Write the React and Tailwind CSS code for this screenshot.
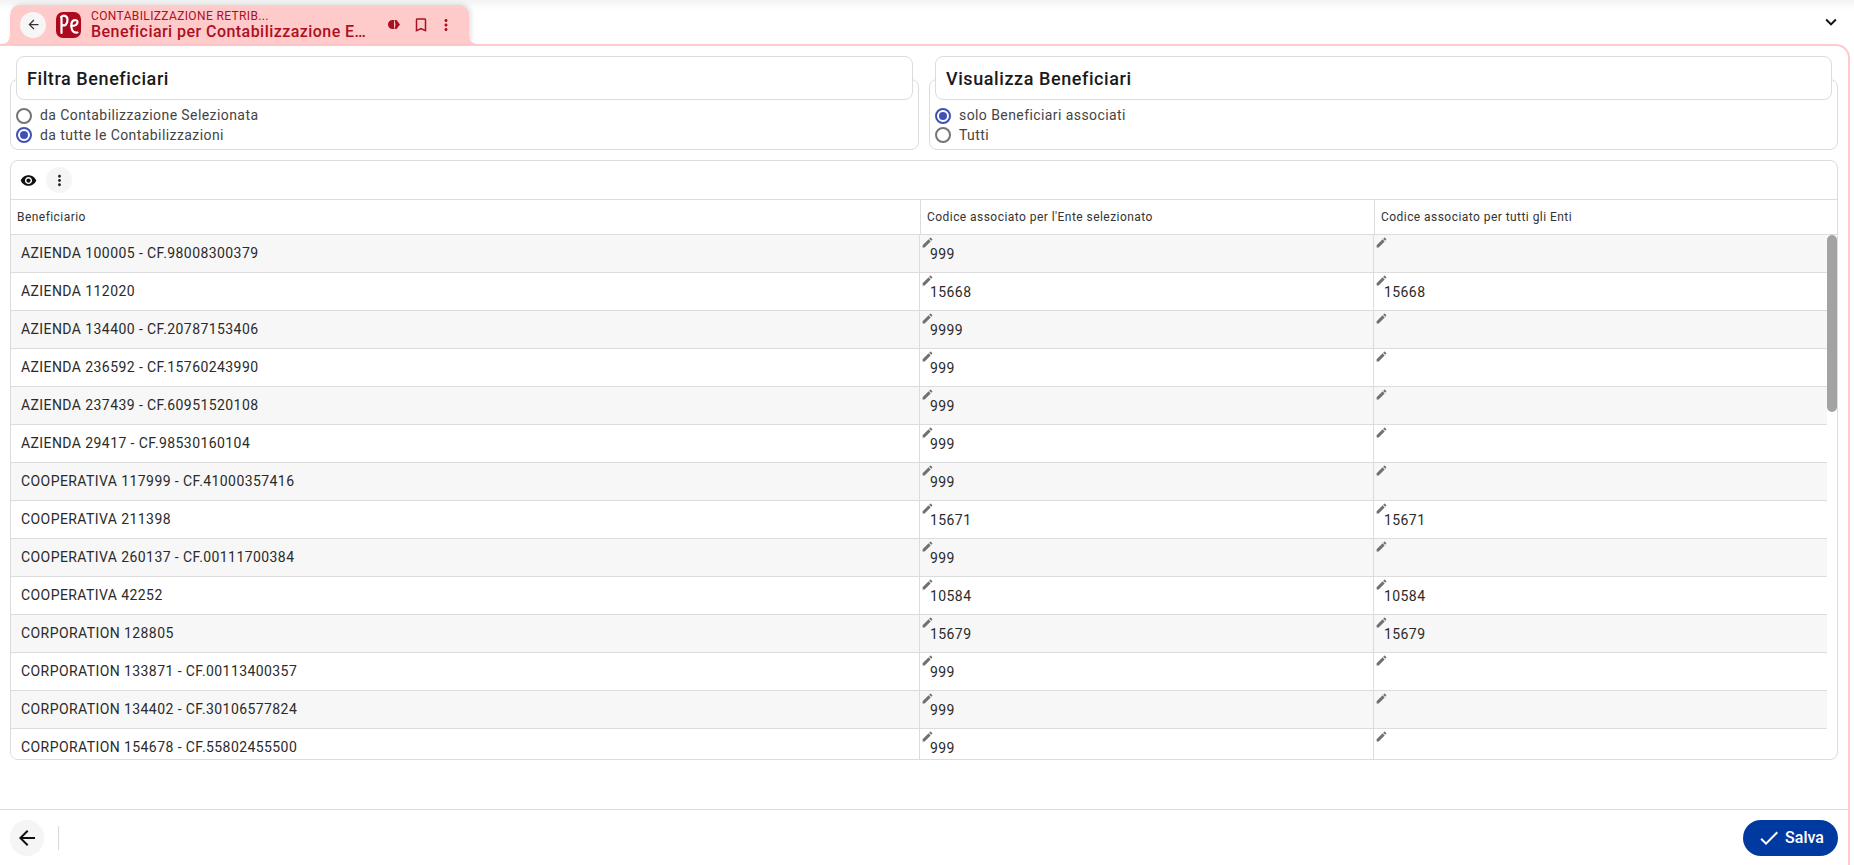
import React from "react";
import { MdArrowBack, MdBookmarkBorder, MdMoreVert, MdKeyboardArrowDown, MdVisibility, MdEdit, MdCheck } from "react-icons/md";

const rows = [
  ["AZIENDA 100005 - CF.98008300379", "999", ""],
  ["AZIENDA 112020", "15668", "15668"],
  ["AZIENDA 134400 - CF.20787153406", "9999", ""],
  ["AZIENDA 236592 - CF.15760243990", "999", ""],
  ["AZIENDA 237439 - CF.60951520108", "999", ""],
  ["AZIENDA 29417 - CF.98530160104", "999", ""],
  ["COOPERATIVA 117999 - CF.41000357416", "999", ""],
  ["COOPERATIVA 211398", "15671", "15671"],
  ["COOPERATIVA 260137 - CF.00111700384", "999", ""],
  ["COOPERATIVA 42252", "10584", "10584"],
  ["CORPORATION 128805", "15679", "15679"],
  ["CORPORATION 133871 - CF.00113400357", "999", ""],
  ["CORPORATION 134402 - CF.30106577824", "999", ""],
  ["CORPORATION 154678 - CF.55802455500", "999", ""],
];

function Radio({ checked, label }) {
  return (
    <label className="flex items-center h-[19.5px] text-[14px] tracking-[0.42px] text-[#444]">
      <span className={`w-[16px] h-[16px] rounded-full border-2 flex items-center justify-center ${checked ? "border-[#3f51b5]" : "border-[#757575]"}`}>
        {checked && <span className="w-[8px] h-[8px] rounded-full bg-[#3f51b5]" />}
      </span>
      <span className="ml-[8px]">{label}</span>
    </label>
  );
}

function Group({ title, options }) {
  return (
    <div className="flex-1 min-w-0">
      <div className="relative z-10 mx-[6px] h-[44px] rounded-[8px] border border-[#dcdcdc] bg-white flex items-center pl-[10px] text-[18px] font-medium tracking-[0.58px] text-[#1a1a1a]">
        {title}
      </div>
      <div className="-mt-[21px] h-[71px] rounded-[8px] border border-[#dcdcdc] pt-[26px] pl-[5px] flex flex-col">
        {options.map((o) => (
          <Radio key={o[0]} label={o[0]} checked={o[1]} />
        ))}
      </div>
    </div>
  );
}

function EditCell({ value }) {
  return (
    <div className="relative h-full border-l border-[#dcdcdc]">
      <MdEdit className="absolute left-[1px] top-[1px] text-[#707070]" size={13} />
      <span className="absolute left-[10px] top-[9px] leading-[20px]">{value}</span>
    </div>
  );
}

export default function App() {
  return (
    <div className="relative h-[865px] w-[1854px] overflow-hidden bg-white flex flex-col font-['Roboto',sans-serif] text-[#2a2a2a]">
      <div className="absolute top-0 left-0 right-0 h-[10px] bg-gradient-to-b from-[#f3f3f3] to-white" />

      <div className="relative z-10 h-[44px] flex items-end justify-between pr-[12px]">
        <div className="relative ml-[10px] w-[459px] h-[39px] rounded-t-[10px] bg-[#ffcaca] flex items-center pl-[10px] shadow-[2px_-1px_5px_rgba(0,0,0,0.12)] text-[#ac0f22]">
          <svg width="10" height="10" viewBox="0 0 10 10" className="absolute -left-[10px] bottom-0">
            <path d="M10 0v10H0c6 0 10-2 10-10z" fill="#ffcaca" />
          </svg>
          <svg width="10" height="10" viewBox="0 0 10 10" className="absolute -right-[10px] bottom-0">
            <path d="M0 0v10h10C4 10 0 8 0 0z" fill="#ffcaca" />
          </svg>
          <span className="w-[26px] h-[26px] rounded-full bg-[#f6f6f6] flex items-center justify-center text-[#333]">
            <MdArrowBack size={15} />
          </span>
          <svg width="26" height="26" viewBox="0 0 26 26" className="ml-[10px] shrink-0">
            <rect width="25" height="26" x="0" y="0" rx="7" fill="#ad0a1f" />
            <path d="M5.500 21V5M5 5c2-2 6.500-2 6.500 3s-3 6-5 5" fill="none" stroke="#fff" strokeWidth="2.200" strokeLinecap="round" />
            <path d="M15 14c3 0 6.500-1 6.500-4s-5.500-2.500-6 1.500 0 10 6 9" fill="none" stroke="#fff" strokeWidth="2.200" strokeLinecap="round" />
          </svg>
          <div className="ml-[9px] w-[277px] min-w-0">
            <div className="text-[12px] leading-[14px] tracking-[0.37px] whitespace-nowrap">CONTABILIZZAZIONE RETRIB...</div>
            <div className="text-[16px] leading-[18px] font-medium tracking-[0.45px] truncate">Beneficiari per Contabilizzazione Ente Selezionata</div>
          </div>
          <svg width="12" height="9" viewBox="0 0 12 9" className="ml-[20px]">
            <path d="M0 4.500A4.500 4.500 0 0 1 4.500 0H6v9H4.500A4.500 4.500 0 0 1 0 4.500z" fill="#ac0f22" />
            <path d="M6.500 0H8.500L12 4.500 8.500 9H6.500L7.500 4.500z" fill="#ac0f22" />
          </svg>
          <MdBookmarkBorder size={18} className="ml-[12px]" />
          <MdMoreVert size={18} className="ml-[7px]" />
        </div>
        <MdKeyboardArrowDown size={22} className="mb-[11px] text-[#111]" />
      </div>

      <div className="relative flex-1 min-h-0 flex flex-col mr-[4px] border-t-2 border-r-2 border-[#ffcaca] rounded-tr-[14px]">
        <div className="flex-1 min-h-0 flex flex-col pl-[10px] pr-[10px] pt-[10px]">
          <div className="flex gap-[10px]">
            <Group
              title="Filtra Beneficiari"
              options={[["da Contabilizzazione Selezionata", false], ["da tutte le Contabilizzazioni", true]]}
            />
            <Group
              title="Visualizza Beneficiari"
              options={[["solo Beneficiari associati", true], ["Tutti", false]]}
            />
          </div>

          <div className="mt-[10px] h-[600px] rounded-[8px] border border-[#dcdcdc] overflow-hidden flex flex-col text-[14px] tracking-[0.42px]">
            <div className="h-[39px] shrink-0 flex items-center pl-[9px] border-b border-[#dcdcdc]">
              <MdVisibility size={17} className="text-[#111]" />
              <span className="ml-[9px] w-[26px] h-[26px] rounded-full bg-[#f5f5f5] flex items-center justify-center text-[#222]">
                <MdMoreVert size={17} />
              </span>
            </div>
            <div className="h-[35px] shrink-0 grid grid-cols-[909px_454px_1fr] items-center border-b border-[#dcdcdc] text-[12px] tracking-[0.45px] text-[#333]">
              <div className="pl-[6px]">Beneficiario</div>
              <div className="h-full flex items-center pl-[6px] border-l border-[#dcdcdc]">Codice associato per l'Ente selezionato</div>
              <div className="h-full flex items-center pl-[6px] border-l border-[#dcdcdc]">Codice associato per tutti gli Enti</div>
            </div>
            <div className="flex-1 min-h-0 flex">
              <div className="flex-1 min-w-0">
                {rows.map((r, i) => (
                  <div
                    key={r[0]}
                    className={`h-[38px] grid grid-cols-[908px_454px_1fr] items-center border-b border-[#dcdcdc] ${i % 2 === 0 ? "bg-[#f7f7f7]" : "bg-white"}`}
                  >
                    <div className="pl-[10px]">{r[0]}</div>
                    <EditCell value={r[1]} />
                    <EditCell value={r[2]} />
                  </div>
                ))}
              </div>
              <div className="w-[10px] shrink-0">
                <div className="w-[10px] h-[177px] rounded-full bg-[#a3a3a3]" />
              </div>
            </div>
          </div>
        </div>

        <div className="h-[56px] shrink-0 border-t border-[#dcdcdc] pt-px flex items-center justify-between pl-[10px] pr-[10px]">
          <div className="flex items-center">
            <span className="w-[34px] h-[36px] rounded-full bg-[#f5f5f5] flex items-center justify-center text-[#111]">
              <MdArrowBack size={24} />
            </span>
            <span className="ml-[14px] w-px h-[24px] bg-[#d8d8d8]" />
          </div>
          <button className="w-[95px] h-[36px] rounded-full bg-[#003aa0] text-white flex items-center justify-center gap-[4px] text-[16px] font-medium">
            <MdCheck size={24} />
            Salva
          </button>
        </div>
      </div>
    </div>
  );
}
